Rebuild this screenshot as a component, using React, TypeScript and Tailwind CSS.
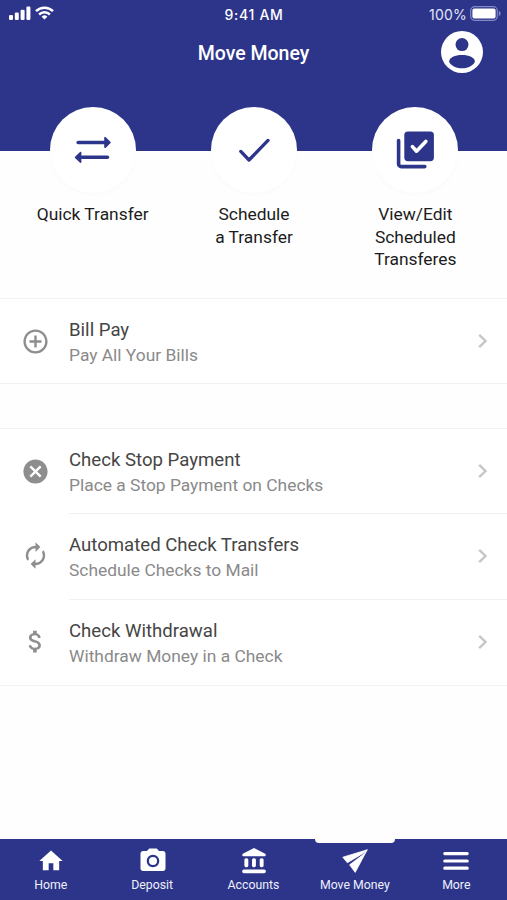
import React from 'react';
import {
  MdAddCircleOutline,
  MdAttachMoney,
  MdAutorenew,
  MdCancel,
  MdHome,
  MdPhotoCamera,
} from 'react-icons/md';

type Row = { title: string; sub: string; icon: React.ReactNode };

const SignalIcon = () => (
  <svg width="22" height="14" viewBox="0 0 22 14" fill="currentColor">
    <rect x="0" y="9" width="4" height="5" rx="1.2" />
    <rect x="5.8" y="6.6" width="4" height="7.4" rx="1.2" />
    <rect x="11.6" y="3.8" width="4" height="10.2" rx="1.2" />
    <rect x="17.4" y="0.6" width="4" height="13.4" rx="1.2" />
  </svg>
);

const WifiIcon = () => (
  <svg width="19" height="14" viewBox="0 0 19 14" fill="none" stroke="currentColor" strokeWidth="2.5">
    <path d="M1 5.2a12.2 12.2 0 0 1 17 0" />
    <path d="M4.1 8.5a7.8 7.8 0 0 1 10.8 0" />
    <path d="M9.5 13.6 6.6 10.7a4.2 4.2 0 0 1 5.8 0z" fill="currentColor" stroke="none" />
  </svg>
);

const BatteryIcon = () => (
  <svg width="31" height="15" viewBox="0 0 31 15">
    <rect x="0.7" y="0.7" width="26.6" height="13.6" rx="4" fill="none" stroke="#8389c4" strokeWidth="1.2" />
    <rect x="2.4" y="2.4" width="23.2" height="10.2" rx="2" fill="#fff" />
    <path d="M28.8 5.1c1.4.5 1.8 1.4 1.8 2.4s-.4 1.9-1.8 2.4z" fill="#8389c4" />
  </svg>
);

const AvatarIcon = () => (
  <svg width="42" height="42" viewBox="0 0 42 42">
    <circle cx="21" cy="21" r="21" fill="#fff" />
    <circle cx="21" cy="13.6" r="6.5" fill="#2d358b" />
    <path d="M8.2 30.4C8.2 26.6 14 24 21 24s12.8 2.6 12.8 6.4c0 2.6-6 6.9-12.8 6.9S8.2 33 8.2 30.4z" fill="#2d358b" />
  </svg>
);

const TransferIcon = () => (
  <svg width="38" height="28" viewBox="0 0 38 28" fill="none" stroke="currentColor" strokeWidth="3.6" strokeLinecap="round" strokeLinejoin="round">
    <path d="M4.2 6.5h26" />
    <path d="M31 1.7v9.6l5-4.8z" fill="currentColor" strokeWidth="1.6" />
    <path d="M33.4 21.3H8" />
    <path d="M6.6 16.5v9.6l-5-4.8z" fill="currentColor" strokeWidth="1.6" />
  </svg>
);

const CheckIcon = () => (
  <svg width="34" height="26" viewBox="0 0 34 26" fill="none" stroke="currentColor" strokeWidth="3.3" strokeLinecap="round" strokeLinejoin="round">
    <path d="M3.8 14.4 12 23 31 3.4" />
  </svg>
);

const LibraryCheckIcon = () => (
  <svg width="38" height="38" viewBox="0 0 38 38" fill="none" strokeLinecap="round" strokeLinejoin="round">
    <rect x="8.3" y="0.6" width="29.6" height="29.6" rx="3.6" fill="currentColor" />
    <path d="M2.6 9.6V33a2.6 2.6 0 0 0 2.6 2.6H28.8" stroke="currentColor" strokeWidth="3.6" />
    <path d="M16.4 15.6 20.5 20.2 29.8 10.4" stroke="#fff" strokeWidth="3.6" />
  </svg>
);

const BankIcon = () => (
  <svg width="26" height="27" viewBox="0 0 26 27" fill="currentColor" className="mb-px ml-px">
    <path d="M13 1 23.7 6.4c.7.4 1 .8 1 1.4v.5c0 .6-.4.9-1 .9H2.3c-.6 0-1-.3-1-.9v-.5c0-.6.3-1 1-1.4z" />
    <rect x="3.4" y="11.2" width="3.9" height="9" rx="1.6" />
    <rect x="11" y="11.2" width="3.9" height="9" rx="1.6" />
    <rect x="18.7" y="11.2" width="3.9" height="9" rx="1.6" />
    <rect x="1.2" y="22.4" width="23.6" height="3.8" rx="1.6" />
  </svg>
);

const PlaneIcon = () => (
  <svg width="26" height="24" viewBox="0 0 26 24" fill="currentColor" stroke="currentColor" strokeWidth="0.8" strokeLinejoin="round">
    <path d="M25.2.8.8 8.2 5.4 13.7 20 5z" />
    <path d="M25.2.8 13.2 23.4 7.6 15.8 20.6 6z" />
  </svg>
);

const MenuIcon = () => (
  <svg width="26" height="20" viewBox="0 0 26 20" stroke="currentColor" strokeWidth="3.2" strokeLinecap="round">
    <path d="M1.8 2.6h22.4M1.8 10h22.4M1.8 17.2h22.4" />
  </svg>
);

const ChevronIcon = () => (
  <svg width="10" height="16" viewBox="0 0 10 16" fill="none" stroke="#c6c6c6" strokeWidth="2.4">
    <path d="M1.2 1.9 7.5 8 1.2 14.1" />
  </svg>
);

const actions = [
  { lines: ['Quick Transfer'], icon: <TransferIcon /> },
  { lines: ['Schedule', 'a Transfer'], icon: <CheckIcon /> },
  { lines: ['View/Edit', 'Scheduled', 'Transferes'], icon: <LibraryCheckIcon /> },
];

const billRows: Row[] = [
  { title: 'Bill Pay', sub: 'Pay All Your Bills', icon: <MdAddCircleOutline size={29} /> },
];

const checkRows: Row[] = [
  { title: 'Check Stop Payment', sub: 'Place a Stop Payment on Checks', icon: <MdCancel size={29} /> },
  { title: 'Automated Check Transfers', sub: 'Schedule Checks to Mail', icon: <MdAutorenew size={29} /> },
  { title: 'Check Withdrawal', sub: 'Withdraw Money in a Check', icon: <MdAttachMoney size={29} /> },
];

const tabs = [
  { label: 'Home', icon: <MdHome size={28} className="ml-px" /> },
  { label: 'Deposit', icon: <MdPhotoCamera size={30} className="ml-px" /> },
  { label: 'Accounts', icon: <BankIcon /> },
  { label: 'Move Money', icon: <PlaneIcon />, active: true },
  { label: 'More', icon: <MenuIcon /> },
];

const RowList = ({ rows }: { rows: Row[] }) => (
  <div className="border-y border-[#f1f1f1] bg-white">
    {rows.map((row, idx) => (
      <div key={row.title} className="flex h-[85.75px] items-stretch first:h-[84px]">
        <div className="flex w-[69px] items-center pl-[20.5px] text-[#8e8e8e]">{row.icon}</div>
        <div className={`flex flex-1 items-center justify-between pr-[19px] ${idx > 0 ? 'border-t border-[#f1f1f1]' : ''}`}>
          <div className="whitespace-nowrap pt-[3px]">
            <p className="text-[18.6px] leading-[26px] text-[#454545]">{row.title}</p>
            <p className="text-[17.4px] leading-[25.5px] text-[#8a8a8a]">{row.sub}</p>
          </div>
          <ChevronIcon />
        </div>
      </div>
    ))}
  </div>
);

const App: React.FC = () => (
  <div className="flex h-[900px] w-[507px] flex-col overflow-hidden bg-[#fefefe] font-['Roboto',sans-serif]">
    <header className="h-[151px] shrink-0 bg-[#2d358b] text-white">
      {/* Status bar */}
      <div className="grid h-7 grid-cols-3 items-center pl-[7px] pr-[6px]">
        <div className="-mt-0.5 flex items-center gap-1 pl-0.5">
          <SignalIcon />
          <WifiIcon />
        </div>
        <span className="text-center font-['Inter',sans-serif] text-[14px] font-medium tracking-[0.7px]">9:41 AM</span>
        <div className="-mt-0.5 flex items-center justify-end gap-[3px] font-['Inter',sans-serif] text-[14px] tracking-[0.2px] text-[#e3e5f6]">
          <span className="pt-0.5">100%</span>
          <BatteryIcon />
        </div>
      </div>
      {/* Title bar */}
      <div className="grid h-12 grid-cols-[60px_1fr_60px] items-center pr-6">
        <span />
        <h1 className="pl-6 pt-1 text-center text-[19.5px] font-medium">Move Money</h1>
        <span className="justify-self-end">
          <AvatarIcon />
        </span>
      </div>
    </header>

    {/* Quick actions straddle the header edge */}
    <section className="-mt-11 flex h-[191px] shrink-0 pl-3 pr-[11px]">
      {actions.map((action) => (
        <button key={action.lines[0]} className="flex flex-1 flex-col items-center">
          <span className="flex h-[86px] w-[86px] items-center justify-center rounded-full bg-white text-[#2d358b] shadow-[0_2px_4px_rgba(0,0,0,0.02)]">
            {action.icon}
          </span>
          <span className="mt-[10px] text-[17.4px] leading-[22.5px] text-[#1c1c1c]">
            {action.lines.map((line) => (
              <span key={line} className="block whitespace-nowrap">{line}</span>
            ))}
          </span>
        </button>
      ))}
    </section>

    <main className="flex flex-1 flex-col gap-11">
      <RowList rows={billRows} />
      <RowList rows={checkRows} />
    </main>

    <nav className="grid h-[61px] shrink-0 grid-cols-5 bg-[#2d358b] text-white">
      {tabs.map((tab) => (
        <a key={tab.label} className="relative flex flex-col items-center">
          {tab.active && <span className="absolute -top-px h-[5px] w-[80px] rounded-b bg-[#fefefe]" />}
          <span className="mt-[5px] flex h-[34px] items-center">{tab.icon}</span>
          <span className="whitespace-nowrap text-[12.3px] leading-[14px] text-[#eef0fb]">{tab.label}</span>
        </a>
      ))}
    </nav>
  </div>
);

export default App;
